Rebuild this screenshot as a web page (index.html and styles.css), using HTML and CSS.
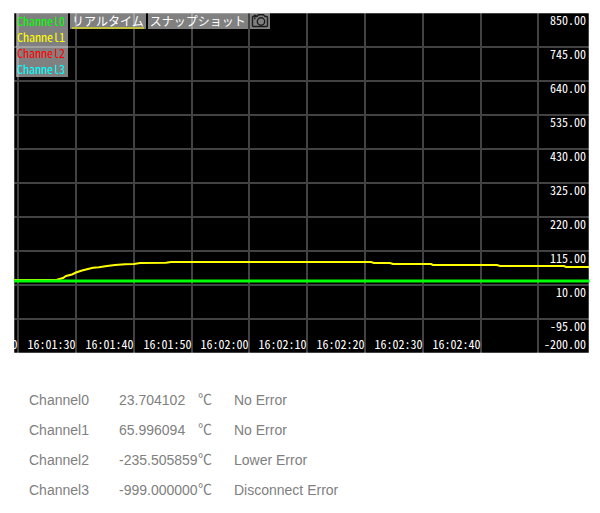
FILE: index.html
```html
<!DOCTYPE html>
<html lang="ja">
<head>
  <meta charset="UTF-8">
  <title>Temperature Monitor</title>
  <link rel="stylesheet" href="styles.css">
</head>
<body>
  <div class="chart">
    <svg class="plot" width="576" height="340" viewBox="0 0 576 340">
      <g id="grid" class="grid"></g>
      <polyline class="line-ch1" points="0,267 43,266.7 49,265 52,263 58,261.5 62,259.5 68,257.5 74,256 79,254.8 85,254.3 93,253 101,252 111,251.2 120,251 126,250 152,249.7 157,249 357,249 360,250 376,250 379,251 417,251 419,252 483,252 486,253 550,253 552,254 575,254"/>
      <path class="line-ch0" d="M0 268H575.5"/>
      <g id="labels" class="labels"></g>
    </svg>
    <div class="overlay">
      <ul class="legend">
        <li class="ch0">Channel0</li>
        <li class="ch1">Channel1</li>
        <li class="ch2">Channel2</li>
        <li class="ch3">Channel3</li>
      </ul>
      <div class="tab active"><span>リアルタイム</span></div>
      <div class="tab"><span>スナップショット</span></div>
      <div class="camera">
        <svg width="20" height="16" viewBox="0 0 20 16">
          <path d="M3.5 3.5H7L8.5 1.7H13.5L15 3.5H16.5Q17.5 3.5 17.5 4.5V12.5Q17.5 13.5 16.5 13.5H3.5Q2.5 13.5 2.5 12.5V4.5Q2.5 3.5 3.5 3.5ZM3.5 2.5H6.5M4 5.5H5.5"/>
          <circle cx="11" cy="8.5" r="3.7"/>
        </svg>
      </div>
    </div>
  </div>

  <div class="values">
    <div>Channel0</div><div>23.704102</div><div class="unit">℃</div><div>No Error</div>
    <div>Channel1</div><div>65.996094</div><div class="unit">℃</div><div>No Error</div>
    <div>Channel2</div><div>-235.505859</div><div class="unit">℃</div><div>Lower Error</div>
    <div>Channel3</div><div>-999.000000</div><div class="unit">℃</div><div>Disconnect Error</div>
  </div>

  <script>
    const grid = document.getElementById("grid");
    const labels = document.getElementById("labels");
    const columns = [4, 62, 120, 178, 235, 293, 351, 409, 467, 524];
    const times = ["16:01:20", "16:01:30", "16:01:40", "16:01:50", "16:02:00", "16:02:10", "16:02:20", "16:02:30", "16:02:40"];

    let d = "";
    columns.forEach(x => d += `M${x} 0V340`);
    for (let i = 1; i < 10; i++) d += `M0 ${i * 34}H575`;
    grid.innerHTML = `<path d="${d}"/><path class="frame" d="M0.5 0V340M574.5 0V340M0 0.5H575M0 339.5H575"/>`;

    let text = "";
    times.forEach((t, i) => text += `<text x="${columns[i] - 48.5}" y="336">${t}</text>`);
    for (let i = 0; i <= 10; i++) {
      const value = (850 - i * 105).toFixed(2);
      const y = i == 10 ? 336 : 12 + i * 34;
      text += `<text x="${572 - value.length * 6}" y="${y}">${value}</text>`;
    }
    labels.innerHTML = text;
  </script>
</body>
</html>
```
FILE: styles.css
```css
body {
  margin: 0;
  padding: 13px 0 0 14px;
  background: #fff;
  font-family: "Liberation Sans", Arial, "Noto Sans CJK JP", sans-serif;
}

.chart {
  position: relative;
  width: 576px;
  height: 340px;
}

.plot {
  display: block;
  background: linear-gradient(#000, #000) 0 0 / 575px 340px no-repeat;
}

.grid path {
  fill: none;
  stroke: rgba(255, 255, 255, 0.26);
  stroke-width: 2;
}

.grid .frame {
  stroke-width: 1;
}

.line-ch0,
.line-ch1 {
  fill: none;
  stroke: #0f0;
  stroke-width: 3;
}

.line-ch1 {
  stroke: #ff0;
  stroke-width: 2;
}

.labels,
.overlay {
  font-family: "Noto Sans CJK JP", monospace;
  font-size: 12px;
  font-feature-settings: "hwid";
}

.labels {
  fill: #fff;
}

.overlay {
  position: absolute;
  top: 0;
  left: 2px;
  display: flex;
  align-items: flex-start;
  gap: 2px;
  line-height: 16px;
  color: #fff;
}

.legend,
.tab,
.camera {
  box-sizing: border-box;
  background: rgba(255, 255, 255, 0.5);
}

.legend {
  width: 52px;
  margin: 0;
  padding: 0 0 0 1px;
  list-style: none;
}

.ch0 { color: #0f0; }
.ch1 { color: #ff0; }
.ch2 { color: #f00; }
.ch3 { color: #0ff; }

.tab {
  height: 16px;
  padding: 0 2px;
  white-space: nowrap;
}

.tab span {
  display: block;
  box-sizing: border-box;
  height: 16px;
}

.active span {
  border-bottom: 2px solid #c0c040;
}

.camera {
  width: 20px;
  height: 16px;
}

.camera svg {
  display: block;
  fill: none;
  stroke: #1c1c1c;
  stroke-width: 1.4;
}

.values {
  display: grid;
  grid-template-columns: 90px 79px 36px auto;
  margin: 32px 0 0 15px;
  font-size: 14px;
  line-height: 30px;
  color: #808080;
}

.values div {
  height: 30px;
}

.values .unit {
  line-height: 28px;
}
```
